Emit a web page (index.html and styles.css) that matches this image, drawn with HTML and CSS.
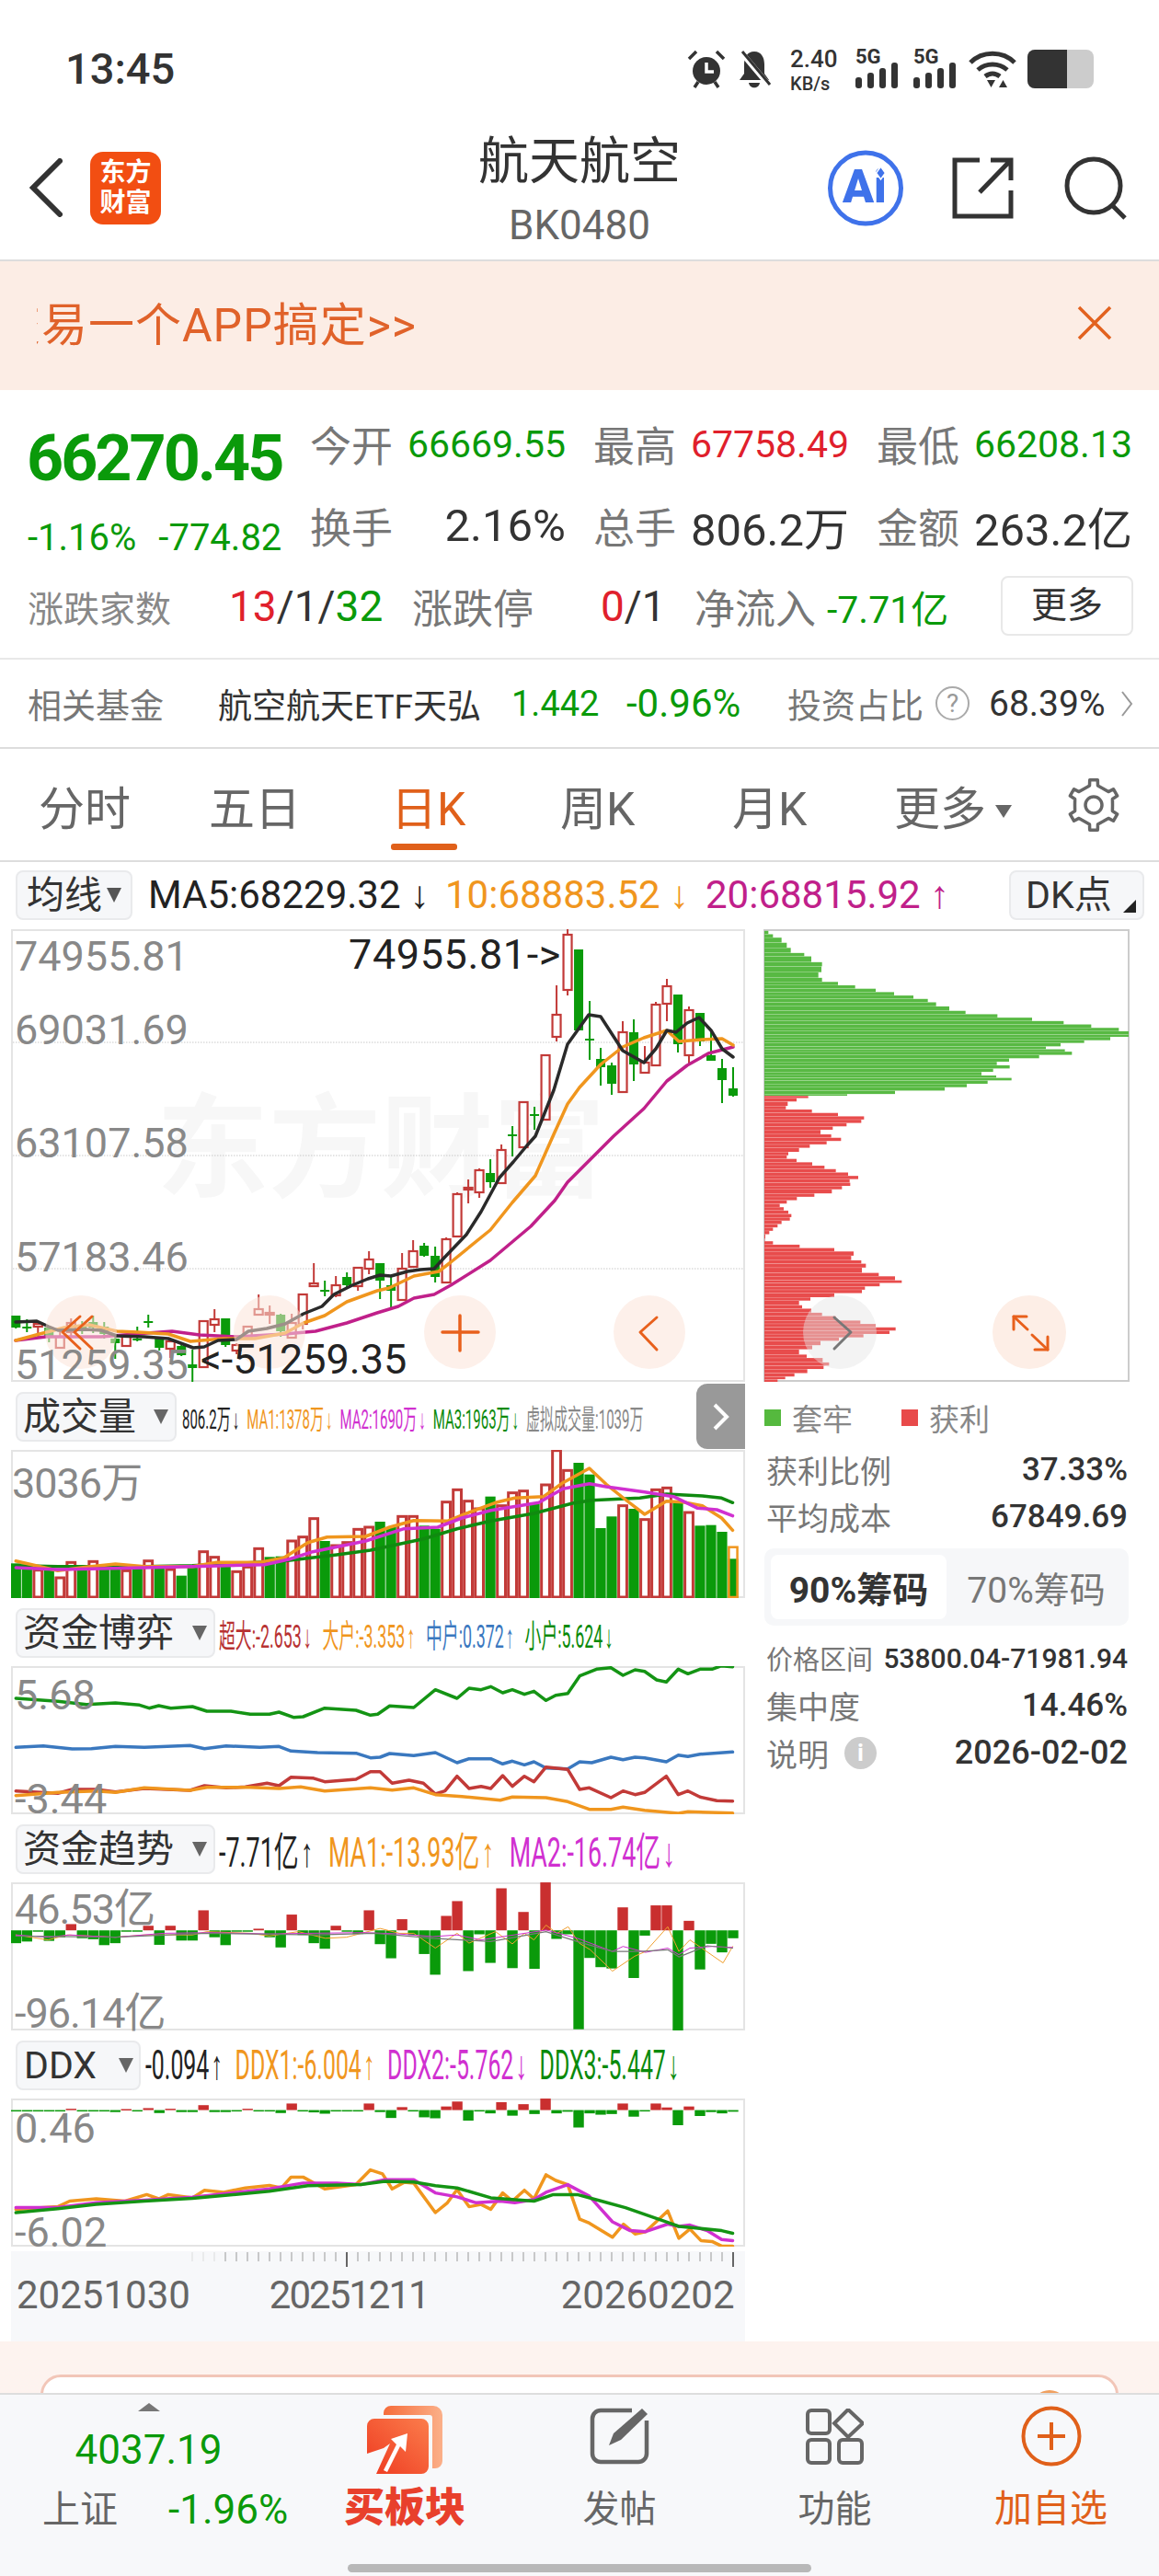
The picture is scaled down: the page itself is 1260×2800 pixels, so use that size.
FILE: index.html
```html
<!DOCTYPE html>
<html lang="zh">
<head>
<meta charset="utf-8">
<title>航天航空</title>
<link rel="stylesheet" href="styles.css">
</head>
<body>
<div class="page">
  <div class="status">
    <div class="time">13:45</div>
    <div class="sys">
      <svg class="ic-alarm" viewBox="0 0 42 42"><circle cx="21" cy="23" r="15" fill="#333"/><path d="M21 14v10h8" stroke="#fff" stroke-width="3.5" fill="none"/><path d="M2 10 10 2M40 10 32 2M8 41l4-6M34 41l-4-6" stroke="#333" stroke-width="3.5"/></svg>
      <svg class="ic-bell" viewBox="0 0 38 42"><path d="M19 2c-8 0-11 7-11 14v10L3 33h32l-5-7V16c0-7-3-14-11-14Z" fill="#333"/><path d="M13 36h12c-1 7-11 7-12 0Z" fill="#333"/><path d="M4 2 36 40" stroke="#fff" stroke-width="6"/><path d="M6 2 36 38" stroke="#333" stroke-width="3"/></svg>
      <div class="speed"><b>2.40</b><span>KB/s</span></div>
      <div class="sim"><span>5G</span><svg viewBox="0 0 46 28"><rect x="0" y="16" width="7" height="12" rx="3" fill="#333"/><rect x="13" y="11" width="7" height="17" rx="3" fill="#333"/><rect x="26" y="6" width="7" height="22" rx="3" fill="#333"/><rect x="39" y="0" width="7" height="28" rx="3" fill="#333"/></svg></div>
      <div class="sim"><span>5G</span><svg viewBox="0 0 46 28"><rect x="0" y="16" width="7" height="12" rx="3" fill="#333"/><rect x="13" y="11" width="7" height="17" rx="3" fill="#333"/><rect x="26" y="6" width="7" height="22" rx="3" fill="#333"/><rect x="39" y="0" width="7" height="28" rx="3" fill="#333"/></svg></div>
      <svg class="ic-wifi" viewBox="0 0 52 42"><path d="M2 14C15 1 37 1 50 14M10 22c9-8 23-8 32 0M18 29c5-4 11-4 16 0" fill="none" stroke="#333" stroke-width="5"/><path d="M20 33h9l-4.500 8ZM33 41h9l-4.500-8Z" fill="#333"/></svg>
      <div class="battery"><div class="battery-fill"></div></div>
    </div>
  </div>

  <header class="nav">
    <div class="nav-left">
      <svg class="ic-back" viewBox="0 0 36 64"><path d="M33 3 4 32l29 29" fill="none" stroke="#333" stroke-width="6" stroke-linecap="round"/></svg>
      <div class="logo"><span>东方</span><span>财富</span></div>
    </div>
    <div class="nav-title"><div class="title">航天航空</div><div class="code">BK0480</div></div>
    <div class="nav-right">
      <svg class="ic-ai" viewBox="0 0 82 83"><circle cx="41" cy="41.500" r="38.500" fill="#fff" stroke="#3f72ea" stroke-width="5"/><text x="16" y="57" class="ai-text">Ai</text><path d="M57.500 18l5 7-5 7-5-7Z" fill="#3f72ea" stroke="#fff" stroke-width="1.500"/></svg>
      <svg class="ic-share" viewBox="0 0 67 67"><path d="M30 3H3v61h61V36" fill="none" stroke="#333" stroke-width="5"/><path d="M30 38 63 4M42 3h22v22" fill="none" stroke="#333" stroke-width="5"/></svg>
      <svg class="ic-search" viewBox="0 0 68 69"><circle cx="32" cy="32" r="29" fill="none" stroke="#333" stroke-width="5"/><path d="M52 53 66 67" stroke="#333" stroke-width="5"/></svg>
    </div>
  </header>

  <div class="banner">
    <div class="banner-text"><span>交易一个APP搞定&gt;&gt;</span></div>
    <svg class="ic-close" viewBox="0 0 38 38"><path d="M2 2 36 36M36 2 2 36" stroke="#e2621f" stroke-width="3.500"/></svg>
  </div>

  <section class="quote">
    <div class="quote-top">
      <div class="quote-main">
        <div class="price">66270.45</div>
        <div class="change"><span>-1.16%</span><span>-774.82</span></div>
      </div>
      <div class="quote-grid">
        <div class="qcell"><span class="lab">今开</span><span class="v-sm down">66669.55</span></div>
        <div class="qcell"><span class="lab">最高</span><span class="v-sm up">67758.49</span></div>
        <div class="qcell"><span class="lab">最低</span><span class="v-sm down">66208.13</span></div>
        <div class="qcell"><span class="lab">换手</span><span class="v-lg">2.16%</span></div>
        <div class="qcell"><span class="lab">总手</span><span class="v-lg">806.2万</span></div>
        <div class="qcell"><span class="lab">金额</span><span class="v-lg">263.2亿</span></div>
      </div>
    </div>
    <div class="breadth">
      <span class="bl-sm">涨跌家数</span>
      <span class="bv"><i class="up">13</i>/1/<i class="down">32</i></span>
      <span class="bl">涨跌停</span>
      <span class="bv"><i class="up">0</i>/1</span>
      <span class="bl">净流入</span>
      <span class="bv-m down">-7.71亿</span>
      <span class="more-btn">更多</span>
    </div>
  </section>

  <div class="fund">
    <span class="fl">相关基金</span>
    <span class="fn">航空航天ETF天弘</span>
    <span class="fv-a down">1.442</span>
    <span class="fv-b down">-0.96%</span>
    <span class="fl">投资占比</span>
    <span class="help">?</span>
    <span class="fv">68.39%</span>
    <svg class="ic-fchev" viewBox="0 0 14 30"><path d="M2 2 12 15 2 28" fill="none" stroke="#999" stroke-width="2"/></svg>
  </div>

  <nav class="tabs">
    <span class="tab t1">分时</span>
    <span class="tab t2">五日</span>
    <span class="tab t3 active">日K</span>
    <span class="tab t4">周K</span>
    <span class="tab t5">月K</span>
    <span class="tab t6">更多<i class="tri-down"></i></span>
    <svg class="ic-gear" viewBox="0 0 58 58"><polygon id="gearShape" fill="none" stroke="#666" stroke-width="3.500" stroke-linejoin="round"/><circle cx="29" cy="29" r="9" fill="none" stroke="#666" stroke-width="3.500"/></svg>
  </nav>

  <div class="ma-row">
    <span class="select sel-ma">均线<i class="tri"></i></span>
    <span class="ma-val m5">MA5:68229.32<em>↓</em></span>
    <span class="ma-val m10">10:68883.52<em>↓</em></span>
    <span class="ma-val m20">20:68815.92<em>↑</em></span>
    <span class="select sel-dk">DK点<i class="corner"></i></span>
  </div>

  <div class="charts">
    <div class="col-left">
      <div class="plot plot-main">
        <div class="watermark">东方财富</div>
        <svg id="mainChart" viewBox="12 1010 798 492"></svg>
        <span class="ax a1">74955.81</span>
        <span class="ax a2">69031.69</span>
        <span class="ax a3">63107.58</span>
        <span class="ax a4">57183.46</span>
        <span class="ax a5">51259.35</span>
        <span class="mark mk1">74955.81-&gt;</span>
        <span class="mark mk2">&lt;-51259.35</span>
      </div>

      <div class="ihead">
        <span class="select sel-vol">成交量<i class="tri"></i></span>
        <div class="vals vals-vol">
          <span class="c-k">806.2万<em>↓</em></span>
          <span class="c-o">MA1:1378万<em>↓</em></span>
          <span class="c-m">MA2:1690万<em>↓</em></span>
          <span class="c-g">MA3:1963万<em>↓</em></span>
          <span class="c-gray">虚拟成交量:1039万</span>
        </div>
        <div class="side-tab"><svg viewBox="0 0 20 32"><path d="M3 3 16 16 3 29" fill="none" stroke="#fff" stroke-width="4"/></svg></div>
      </div>
      <div class="plot plot-sub">
        <svg id="volChart" viewBox="12 1576 798 161"></svg>
        <span class="ax vol-ax">3036万</span>
      </div>

      <div class="ihead">
        <span class="select sel-fund">资金博弈<i class="tri"></i></span>
        <div class="vals vals-game">
          <span class="c-r">超大:-2.653<em>↓</em></span>
          <span class="c-o">大户:-3.353<em>↑</em></span>
          <span class="c-b">中户:0.372<em>↑</em></span>
          <span class="c-g">小户:5.624<em>↓</em></span>
        </div>
      </div>
      <div class="plot plot-sub">
        <svg id="gameChart" viewBox="12 1811 798 161"></svg>
        <span class="ax g-top">5.68</span>
        <span class="ax g-bot">-3.44</span>
      </div>

      <div class="ihead">
        <span class="select sel-fund">资金趋势<i class="tri"></i></span>
        <div class="vals vals-trend">
          <span class="c-k">-7.71亿<em>↑</em></span>
          <span class="c-o">MA1:-13.93亿<em>↑</em></span>
          <span class="c-m">MA2:-16.74亿<em>↓</em></span>
        </div>
      </div>
      <div class="plot plot-sub">
        <svg id="trendChart" viewBox="12 2046 798 161"></svg>
        <span class="ax t-top">46.53亿</span>
        <span class="ax t-bot">-96.14亿</span>
      </div>

      <div class="ihead">
        <span class="select sel-ddx">DDX<i class="tri"></i></span>
        <div class="vals vals-ddx">
          <span class="c-k">-0.094<em>↑</em></span>
          <span class="c-o">DDX1:-6.004<em>↑</em></span>
          <span class="c-m">DDX2:-5.762<em>↓</em></span>
          <span class="c-g">DDX3:-5.447<em>↓</em></span>
        </div>
      </div>
      <div class="plot plot-sub">
        <svg id="ddxChart" viewBox="12 2281 798 161"></svg>
        <span class="ax d-top">0.46</span>
        <span class="ax d-bot">-6.02</span>
      </div>

      <div class="date-axis">
        <svg id="ticks" viewBox="12 2447 798 24"></svg>
        <div class="dates"><span>20251030</span><span class="date2">20251211</span><span class="date3">20260202</span></div>
      </div>
    </div>

    <aside class="col-right">
      <div class="plot plot-chip"><svg id="chipChart" viewBox="830 1010 398 492"></svg></div>
      <div class="legend">
        <i class="sq sq-g"></i><span class="leg-a">套牢</span>
        <i class="sq sq-r"></i><span>获利</span>
      </div>
      <div class="kv kv1"><span>获利比例</span><b>37.33%</b></div>
      <div class="kv kv2"><span>平均成本</span><b>67849.69</b></div>
      <div class="seg"><span class="seg-on">90%筹码</span><span class="seg-off">70%筹码</span></div>
      <div class="kv kv3"><span class="small">价格区间</span><b class="range">53800.04-71981.94</b></div>
      <div class="kv kv4"><span>集中度</span><b>14.46%</b></div>
      <div class="kv kv5"><span class="with-info">说明<i class="info">i</i></span><b class="date">2026-02-02</b></div>
    </aside>
  </div>

  <div class="promo"><div class="promo-card"><i class="dome"></i></div></div>

  <footer class="bottom">
    <div class="b-index">
      <i class="tri-up"></i>
      <div class="idx-val">4037.19</div>
      <div class="idx-row"><span>上证</span><span class="idx-pct">-1.96%</span></div>
    </div>
    <div class="b-item">
      <svg class="ic-buy" viewBox="0 0 82 74"><defs><linearGradient id="gb" x1="0" y1="1" x2="1" y2="0"><stop offset="0" stop-color="#ee3a20"/><stop offset="1" stop-color="#fb7d4c"/></linearGradient><linearGradient id="gb2" x1="0" y1="0" x2="1" y2="0"><stop offset="0" stop-color="#f66c3a"/><stop offset="1" stop-color="#fbb089"/></linearGradient></defs><path d="M18 8a8 8 0 0 1 8-8h46a10 10 0 0 1 10 10v50a8 8 0 0 1-8 8h-3V13a3 3 0 0 0-3-3H18Z" fill="url(#gb2)"/><path d="M0 22a8 8 0 0 1 8-8h51a8 8 0 0 1 8 8v44a8 8 0 0 1-8 8H10l15-33-7 5L0 52Z" fill="url(#gb)"/><path d="M26 36 44 30l-2 20-6-6-14 28-4-2 14-28Z" fill="#fff"/></svg>
      <span class="b-buy">买板块</span>
    </div>
    <div class="b-item">
      <svg class="ic-post" viewBox="0 0 65 62"><path d="M46 3H12a9 9 0 0 0-9 9v38a9 9 0 0 0 9 9h41a9 9 0 0 0 9-9V14" fill="none" stroke="#666" stroke-width="4.500"/><path d="M21 41 26 28 57 1 63 7 34 35Z" fill="#666"/></svg>
      <span class="b-lab">发帖</span>
    </div>
    <div class="b-item">
      <svg class="ic-func" viewBox="0 0 63 61"><rect x="2" y="2" width="24" height="25" rx="4" fill="none" stroke="#666" stroke-width="4"/><path d="M46 1 62 16 46 31 31 16Z" fill="none" stroke="#666" stroke-width="4"/><rect x="2" y="34" width="24" height="25" rx="4" fill="none" stroke="#666" stroke-width="4"/><rect x="36" y="34" width="25" height="25" rx="4" fill="none" stroke="#666" stroke-width="4"/></svg>
      <span class="b-lab">功能</span>
    </div>
    <div class="b-item">
      <svg class="ic-add" viewBox="0 0 66 66"><circle cx="33" cy="33" r="30.500" fill="none" stroke="#e0601a" stroke-width="4"/><path d="M33 18v30M18 33h30" stroke="#e0601a" stroke-width="4"/></svg>
      <span class="b-lab b-add">加自选</span>
    </div>
    <div class="home-bar"></div>
  </footer>
</div>
<script src="chart.js"></script>
</body>
</html>
```

FILE: styles.css
```css
* { box-sizing: border-box; }
html, body { margin: 0; padding: 0; background: #fff; }
body { font-family: Roboto, "Liberation Sans", "Noto Sans CJK SC", sans-serif; color: #333; }
i, em { font-style: normal; }
svg { display: block; }
.page { width: 1260px; height: 2800px; overflow: hidden; position: relative; }
.up { color: #e0202c; }
.down { color: #0a9a0a; }

/* status */
.status { height: 120px; display: flex; justify-content: space-between; padding: 54px 71px 0; }
.time { font-size: 47px; line-height: 42px; font-weight: 500; color: #333; }
.sys { display: flex; align-items: flex-start; height: 42px; }
.ic-alarm { width: 42px; height: 42px; }
.ic-bell { width: 38px; height: 42px; margin-left: 12px; }
.speed { margin-left: 20px; width: 60px; display: flex; flex-direction: column; }
.speed b { font-size: 26px; line-height: 20px; font-weight: 500; }
.speed span { font-size: 20px; line-height: 20px; margin-top: 7px; font-weight: 500; }
.sim { width: 46px; height: 42px; margin-left: 11px; position: relative; display: flex; flex-direction: column; }
.sim + .sim { margin-left: 17px; }
.sim span { font-size: 22px; line-height: 16px; font-weight: 700; }
.sim svg { width: 46px; height: 28px; margin-top: -2px; }
.ic-wifi { width: 52px; height: 42px; margin-left: 14px; }
.battery { width: 72px; height: 42px; margin-left: 12px; background: #ccc; border-radius: 8px; overflow: hidden; }
.battery-fill { width: 43px; height: 42px; background: #333; }

/* nav */
.nav { height: 164px; display: grid; grid-template-columns: 1fr auto 1fr; border-bottom: 2px solid #ddd; }
.nav-left { display: flex; align-items: center; padding-left: 32px; gap: 30px; padding-top: 6px; }
.ic-back { width: 36px; height: 64px; }
.logo { width: 77px; height: 79px; background: #f24e12; border-radius: 14px; color: #fff; font-size: 28px; line-height: 33px; font-weight: 700; display: flex; flex-direction: column; align-items: center; justify-content: center; }
.nav-title { text-align: center; padding-top: 25px; }
.title { font-size: 55px; line-height: 60px; color: #333; }
.code { font-size: 44px; line-height: 40px; margin-top: 20px; color: #666; }
.nav-right { display: flex; align-items: center; justify-content: flex-end; padding-right: 35px; padding-top: 6px; }
.ic-ai { width: 82px; height: 83px; }
.ai-text { font: 900 50px Roboto, sans-serif; fill: #3f72ea; }
.ic-share { width: 67px; height: 67px; margin-left: 53px; }
.ic-search { width: 68px; height: 69px; margin-left: 55px; }

/* banner */
.banner { height: 140px; background: #fcede5; display: flex; align-items: center; justify-content: space-between; padding: 0 51px 0 40px; }
.banner-text { width: 600px; overflow: hidden; }
.banner-text span { display: block; margin-left: -46px; font-size: 50px; line-height: 56px; letter-spacing: 1px; color: #e0622a; white-space: nowrap; }
.ic-close { width: 38px; height: 38px; margin-top: -6px; }

/* quote */
.quote { height: 293px; border-bottom: 2px solid #e8e8e8; padding: 14px 0 0 30px; }
.quote-top { display: flex; height: 178px; }
.quote-main { width: 309px; padding-top: 30px; }
.price { font-size: 70px; line-height: 60px; font-weight: 700; color: #0a9a0a; letter-spacing: -3px; margin-left: -1px; }
.change { display: flex; gap: 24px; margin-top: 27px; font-size: 40px; line-height: 60px; color: #0a9a0a; }
.quote-grid { display: grid; grid-template-columns: repeat(3, 276px); column-gap: 32px; grid-auto-rows: 89px; }
.qcell { display: flex; align-items: center; justify-content: space-between; }
.lab { font-size: 45px; color: #777; margin-left: -2px; }
.v-sm { font-size: 41px; }
.v-lg { font-size: 49px; color: #333; }
.breadth { margin-left: -30px; padding-left: 30px; margin-top: 10px; height: 65px; display: grid; grid-template-columns: 219px 199px 205px 102px 144px 189px 144px; align-items: center; }
.bl-sm { font-size: 39px; color: #888; }
.bl { font-size: 44px; color: #777; }
.bv { font-size: 46px; color: #333; }
.bv-m { font-size: 41px; }
.more-btn { height: 65px; border: 2px solid #e8e8e8; border-radius: 8px; font-size: 39px; line-height: 60px; text-align: center; color: #333; }

/* fund */
.fund { height: 97px; border-bottom: 2px solid #ddd; display: grid; padding-left: 30px; grid-template-columns: 207px 322px 122px 175px 161px 58px 143px 14px; align-items: center; }
.fl { font-size: 37px; color: #777; }
.fn { font-size: 37px; color: #333; white-space: nowrap; }
.fv { font-size: 39px; }
.fv-a { font-size: 38px; margin-left: -3px; }
.fv-b { font-size: 42px; }
.help { width: 37px; height: 37px; border: 2px solid #aaa; border-radius: 50%; color: #999; font-size: 28px; line-height: 33px; text-align: center; }
.ic-fchev { width: 14px; height: 30px; }

/* tabs */
.tabs { height: 123px; border-bottom: 2px solid #ddd; padding-left: 42px; display: grid; grid-template-columns: 185px 201px 181px 187px 176px 186px 58px; align-items: center; }
.tab { font-size: 50px; color: #666; position: relative; white-space: nowrap; }
.tab.active { color: #e0601a; margin-left: -3px; }
.tab.active::after { content: ""; position: absolute; left: 0; top: 78px; width: 72px; height: 7px; border-radius: 3px; background: #e0601a; }
.tri-down { display: inline-block; margin-left: 10px; vertical-align: 8px; border-style: solid; border-width: 14px 9px 0; border-color: #666 transparent transparent; }
.ic-gear { width: 58px; height: 58px; margin-left: 2px; }

/* MA row */
.ma-row { height: 73px; padding: 9px 16px 0 17px; display: flex; align-items: flex-start; position: relative; }
.select { flex: none; height: 54px; border: 2px solid #e9eaec; border-radius: 8px; background: #f6f7f9; color: #333; font-size: 41px; line-height: 50px; display: flex; align-items: center; position: relative; white-space: nowrap; }
.tri { position: absolute; top: 17px; border-style: solid; border-width: 16px 8px 0; border-color: #666 transparent transparent; }
.sel-ma { width: 127px; padding-left: 10px; }
.sel-ma .tri { left: 97px; border-color: #555 transparent transparent; }
.ma-val { font-size: 42px; line-height: 54px; white-space: nowrap; }
.ma-val em { margin-left: 10px; }
.m5 { margin-left: 17px; color: #222; width: 323px; }
.m10 { color: #f0961e; width: 283px; }
.m20 { color: #c0208a; }
.sel-dk { width: 147px; padding-left: 16px; margin-left: auto; }
.corner { position: absolute; right: 7px; bottom: 6px; border-style: solid; border-width: 0 0 14px 14px; border-color: transparent transparent #222; }

/* charts */
.charts { display: flex; height: 1535px; padding-left: 12px; gap: 20px; }
.col-left { width: 798px; }
.col-right { width: 398px; }
.plot { position: relative; width: 798px; outline: 2px solid #e4e4e4; outline-offset: -2px; }
.plot svg { position: relative; width: 100%; height: 100%; }
.plot-main { height: 492px; }
.plot-sub { height: 161px; }
.plot-chip { width: 398px; height: 492px; outline-color: #ccc; }
.watermark { position: absolute; left: 158px; top: 175px; font-size: 122px; line-height: 130px; font-weight: 700; color: #f7f7f7; white-space: nowrap; }
.ax { position: absolute; left: 4px; font-size: 45px; line-height: 36px; color: #888; white-space: nowrap; }
.a1 { top: 12px; } .a2 { top: 92px; } .a3 { top: 215px; } .a4 { top: 339px; } .a5 { top: 456px; }
.mark { position: absolute; font-size: 45px; line-height: 36px; color: #222; white-space: nowrap; }
.mk1 { left: 367px; top: 10px; letter-spacing: .6px; }
.mk2 { left: 206px; top: 450px; }
.vol-ax { left: 1px; top: 19px; letter-spacing: -1px; }
.g-top { top: 14px; } .g-bot { top: 127px; }
.t-top { top: 12px; letter-spacing: -1px; } .t-bot { top: 125px; letter-spacing: -1px; }
.d-top { top: 15px; } .d-bot { top: 128px; }

.ihead { height: 74px; position: relative; padding: 11px 0 0 5px; display: flex; align-items: flex-start; }
.sel-vol { width: 175px; padding-left: 6px; }
.sel-vol .tri { left: 148px; }
.sel-fund { width: 217px; padding-left: 6px; }
.sel-fund .tri { left: 190px; }
.sel-ddx { width: 136px; padding-left: 7px; }
.sel-ddx .tri { left: 110px; }
.vals { flex: none; display: flex; white-space: nowrap; transform-origin: left center; height: 54px; align-items: center; }
.vals em { margin-left: 4px; }
.vals-vol { margin-left: 6px; font-size: 30px; gap: 16px; transform: scaleX(.5); }
.vals-game { margin-left: 4px; font-size: 35px; gap: 23px; transform: scaleX(.51); }
.vals-trend { margin-left: 4px; font-size: 44px; gap: 27px; transform: scaleX(.61); }
.vals-ddx { margin-left: 5px; font-size: 44px; gap: 24px; transform: scaleX(.565); }
.c-k { color: #222; } .c-o { color: #f0961e; } .c-m { color: #d030d0; } .c-g { color: #0a8a0a; } .c-gray { color: #888; } .c-r { color: #b83232; } .c-b { color: #3a78bf; }
.side-tab { position: absolute; right: 0; top: 2px; bottom: 1px; width: 53px; background: #999; border-radius: 12px 0 0 12px; display: flex; align-items: center; justify-content: center; }
.side-tab svg { width: 20px; height: 32px; }

.date-axis { height: 98px; margin-top: 5px; background: #f7f8fa; }
#ticks { width: 798px; height: 24px; }
.dates { display: flex; padding: 2px 0 0 6px; font-size: 42px; line-height: 44px; color: #666; white-space: nowrap; }
.date2 { margin-left: 86px; letter-spacing: -2px; }
.date3 { margin-left: 144px; }

/* right */
.legend { height: 64px; padding-top: 14px; display: flex; align-items: center; font-size: 33px; color: #888; padding-left: 1px; }
.sq { width: 18px; height: 18px; margin-right: 12px; }
.sq-g { background: #55b93e; }
.sq-r { background: #e84a4a; }
.leg-a { width: 119px; }
.kv { display: flex; justify-content: space-between; align-items: center; padding: 0 2px 0 3px; font-size: 34px; color: #777; white-space: nowrap; }
.kv b { font-size: 35px; font-weight: 500; color: #333; }
.kv1 { height: 50px; margin-top: 6px; }
.kv2 { height: 50px; margin-top: 1px; }
.seg { margin: 10px 1px 0; height: 84px; background: #f6f7f9; border-radius: 10px; padding: 7px; display: flex; align-items: stretch; }
.seg-on { width: 191px; background: #fff; border-radius: 8px; font-size: 39px; font-weight: 700; color: #333; display: flex; align-items: center; justify-content: center; }
.seg-off { flex: 1; font-size: 39px; color: #777; display: flex; align-items: center; justify-content: center; padding-left: 4px; }
.kv3 { height: 50px; margin-top: 10px; }
.small { font-size: 29px; }
.kv b.range { font-size: 30px; }
.kv4 { height: 50px; margin-top: 1px; }
.kv5 { height: 50px; margin-top: 2px; }
.kv b.date { font-size: 36px; }
.with-info { display: flex; align-items: center; }
.info { width: 35px; height: 35px; margin-left: 17px; border-radius: 50%; background: #ccc; color: #fff; font-size: 26px; font-weight: 700; line-height: 35px; text-align: center; }

/* promo */
.promo { height: 56px; background: #fdf3ef; padding: 36px 44px 0; overflow: hidden; }
.promo-card { height: 100px; background: #fff; border: 3px solid #f2c6b8; border-radius: 22px 22px 0 0; position: relative; }
.dome { position: absolute; left: 1074px; top: 14px; width: 40px; height: 40px; border-radius: 50%; background: #f0a060; }

/* bottom */
.bottom { height: 199px; background: #f7f8fa; border-top: 2px solid #ddd; display: grid; grid-template-columns: 323px 234px 233px 235px 235px; position: relative; }
.b-index { display: flex; flex-direction: column; align-items: center; padding-top: 9px; }
.tri-up { border-style: solid; border-width: 0 12px 9px; border-color: transparent transparent #777; }
.idx-val { font-size: 44px; line-height: 50px; margin-top: 17px; color: #0a9a0a; }
.idx-row { align-self: stretch; padding-left: 46px; display: flex; align-items: center; margin-top: 15px; font-size: 41px; line-height: 50px; color: #666; white-space: nowrap; }
.idx-pct { margin-left: 55px; font-size: 44px; color: #0a9a0a; }
.b-item { display: flex; flex-direction: column; align-items: center; padding-top: 12px; }
.ic-buy { width: 82px; height: 74px; }
.b-buy { font-size: 44px; line-height: 50px; margin-top: 12px; font-weight: 900; color: #e8402c; }
.ic-post { width: 65px; height: 62px; margin-top: 2px; }
.ic-func { width: 63px; height: 61px; margin-top: 3px; }
.ic-add { width: 66px; height: 66px; }
.b-lab { font-size: 40px; line-height: 50px; color: #666; margin-top: 24px; }
.b-add { color: #e0601a; font-size: 41px; margin-top: 21px; }
.home-bar { position: absolute; left: 378px; top: 184px; width: 504px; height: 9px; border-radius: 5px; background: #b8b8b8; }
```

FILE: chart.js
```js
var NS = 'http://www.w3.org/2000/svg';
var GREEN = '#0a9a0a', RED = '#c23a38';
function el(parent, tag, attrs) {
  var e = document.createElementNS(NS, tag);
  for (var k in attrs) e.setAttribute(k, attrs[k]);
  parent.appendChild(e);
  return e;
}
function cx(i) { return 17.3 + 11.995 * i; }
function smoothLine(svg, pts, color, w) {
  el(svg, 'polyline', { points: pts.map(function (p) { return p[0].toFixed(1) + ',' + p[1].toFixed(1); }).join(' '), fill: 'none', stroke: color, 'stroke-width': w, 'stroke-linejoin': 'round', 'stroke-linecap': 'round' });
}
function pairs(flat, fx, fy) {
  var out = [];
  for (var i = 0; i < flat.length; i += 2) out.push([fx(flat[i]), fy(flat[i + 1])]);
  return out;
}

/* ---------- main candlesticks: [red?, top, bottom, high, low] ---------- */
var candles = [
[0,1430,1443,1430,1444],[0,1442,1444,1434,1448],[1,1439,1442,1436,1453],[0,1443,1453,1443,1459],[1,1453,1465,1445,1465],
[1,1438,1448,1433,1452],[0,1440,1446,1436,1450],[0,1437,1443,1430,1449],[0,1442,1450,1437,1455],[0,1455,1460,1450,1477],
[1,1453,1463,1453,1463],[0,1455,1457,1442,1458],[0,1436,1438,1429,1443],[0,1453,1465,1453,1468],[1,1458,1466,1456,1476],
[0,1463,1473,1462,1474],[0,1483,1487,1467,1503],[1,1436,1486,1436,1486],[1,1434,1440,1423,1448],[0,1433,1462,1433,1464],
[1,1462,1468,1460,1472],[1,1442,1455,1442,1456],[1,1423,1429,1407,1430],[1,1427,1429,1419,1439],[0,1429,1447,1428,1453],
[1,1438,1454,1428,1454],[1,1407,1439,1406,1445],[1,1395,1398,1373,1398],[0,1402,1403,1392,1409],[1,1397,1408,1387,1410],
[0,1388,1397,1383,1400],[1,1378,1398,1378,1403],[1,1369,1379,1360,1385],[0,1373,1392,1373,1412],[0,1397,1403,1388,1422],
[1,1379,1413,1362,1413],[1,1360,1377,1348,1377],[0,1354,1365,1351,1366],[0,1365,1388,1355,1394],[1,1347,1394,1345,1394],
[1,1298,1344,1296,1344],[1,1291,1293,1282,1308],[1,1272,1296,1270,1302],[0,1275,1285,1260,1291],[1,1250,1286,1244,1286],
[0,1233,1235,1224,1257],[1,1198,1247,1197,1247],[0,1211,1213,1203,1228],[1,1147,1217,1147,1217],[1,1103,1127,1071,1132],
[1,1016,1076,1010,1082],[0,1032,1120,1032,1120],[0,1129,1131,1088,1152],[0,1151,1160,1139,1180],[0,1158,1178,1155,1190],
[1,1122,1187,1110,1187],[0,1122,1157,1108,1175],[1,1155,1166,1137,1166],[1,1092,1158,1089,1158],[1,1072,1091,1064,1110],
[0,1081,1135,1081,1144],[1,1098,1147,1094,1156],[0,1101,1132,1101,1137],[0,1147,1153,1120,1153],[0,1161,1174,1151,1199],[0,1183,1191,1160,1192]
];
var main = document.getElementById('mainChart');
[1133, 1256, 1379].forEach(function (y) {
  el(main, 'line', { x1: 14, x2: 808, y1: y, y2: y, stroke: '#c8c8c8', 'stroke-width': 1, 'stroke-dasharray': '1.500 1.500' });
});
candles.forEach(function (c, i) {
  var x = cx(i), col = c[0] ? RED : GREEN;
  el(main, 'line', { x1: x, x2: x, y1: c[3], y2: c[4], stroke: col, 'stroke-width': 2 });
  if (c[0]) el(main, 'rect', { x: x - 4.5, y: c[1], width: 9, height: c[2] - c[1], fill: '#fff', stroke: col, 'stroke-width': 2.2 });
  else el(main, 'rect', { x: x - 5, y: c[1], width: 10, height: Math.max(c[2] - c[1], 2), fill: col });
});
smoothLine(main, [[17,1457],[50,1453],[110,1453],[160,1449],[187,1447],[217,1451],[257,1453],[310,1450],[343,1447],[377,1438],[410,1427],[433,1420],[450,1411],[472,1407],[490,1397],[533,1370],[577,1333],[603,1305],[617,1285],[667,1235],[700,1205],[725,1175],[747,1158],[770,1145],[797,1138]], '#c0208a', 3.5);
smoothLine(main, [[17,1457],[43,1450],[70,1443],[97,1440],[127,1447],[150,1448],[183,1450],[207,1458],[243,1455],[277,1455],[310,1449],[330,1438],[353,1430],[377,1415],[410,1403],[423,1400],[450,1387],[477,1382],[490,1372],[533,1337],[557,1307],[582,1278],[602,1233],[617,1200],[630,1182],[653,1157],[677,1138],[700,1128],[725,1120],[738,1132],[763,1130],[785,1129],[797,1136]], '#f0961e', 3.5);
smoothLine(main, [[17,1437],[40,1436],[53,1442],[63,1446],[93,1445],[110,1446],[127,1452],[157,1453],[183,1455],[210,1465],[222,1464],[237,1457],[257,1456],[270,1447],[290,1444],[310,1439],[330,1428],[350,1420],[363,1407],[383,1397],[400,1390],[413,1386],[425,1387],[443,1382],[457,1380],[472,1379],[483,1367],[507,1342],[523,1317],[543,1280],[558,1263],[573,1245],[582,1235],[602,1185],[617,1135],[640,1103],[653,1105],[677,1142],[700,1155],[713,1140],[725,1120],[735,1122],[747,1112],[760,1106],[773,1120],[785,1140],[797,1149]], '#2a2a2a', 3.5);
[88, 293, 500, 706].forEach(function (x) {
  el(main, 'ellipse', { cx: x, cy: 1448, rx: 39, ry: 40, fill: '#fce4d8', 'fill-opacity': 0.55 });
});
var OR = '#e8601c';
smoothLine(main, [[87,1431],[68,1448],[87,1466]], OR, 3);
smoothLine(main, [[100,1431],[81,1448],[100,1466]], OR, 3);
smoothLine(main, [[500,1430],[500,1468]], OR, 3.5);
smoothLine(main, [[481,1448],[520,1448]], OR, 3.5);
smoothLine(main, [[714,1432],[696,1448],[714,1467]], OR, 3);

/* ---------- volume ---------- */
var volRed = [2,4,5,7,10,12,14,17,18,20,21,22,25,26,27,29,30,31,32,35,36,39,40,41,42,44,45,46,48,49,50,55,57,58,59,61];
var volTop = [658,665,680,678,705,655,670,652,670,670,682,672,650,675,678,698,672,620,638,668,685,670,610,637,635,585,572,512,585,600,590,547,540,522,540,505,505,535,545,458,418,455,480,440,470,428,422,465,402,290,355,330,368,543,505,470,480,515,418,412,460,492,535,533,555,643];
var vol = document.getElementById('volChart');
var vy = function (z) { return 1480 + z / 3; }, vx = function (z) { return z / 1.912; };
volTop.forEach(function (t, i) {
  var x = cx(i), y = vy(t);
  if (volRed.indexOf(i) >= 0) el(vol, 'rect', { x: x - 4.4, y: y, width: 8.8, height: 1736 - y, fill: '#fff', stroke: RED, 'stroke-width': 3 });
  else el(vol, 'rect', { x: x - 5.6, y: y, width: 11.2, height: 1737 - y, fill: GREEN });
});
el(vol, 'rect', { x: cx(65) - 4.6, y: vy(605), width: 9.2, height: 1736 - vy(605), fill: 'none', stroke: '#f0961e', 'stroke-width': 2.5 });
smoothLine(vol, pairs([33,665,120,668,300,668,400,665,590,650,700,630,770,615,880,578,950,545,1020,520,1110,495,1190,462,1230,452,1330,445,1385,432,1460,438,1500,445,1523,460], vx, vy), '#108a10', 3.5);
smoothLine(vol, pairs([33,650,60,660,120,682,180,670,240,660,300,668,400,668,450,655,540,655,590,640,640,590,680,572,760,570,810,540,860,518,930,520,970,495,1030,460,1070,445,1130,440,1170,395,1225,348,1260,400,1300,450,1340,498,1385,455,1420,458,1460,470,1500,510,1523,550], vx, vy), '#f0961e', 3.5);
smoothLine(vol, pairs([33,672,120,678,300,672,400,668,550,662,600,645,650,620,760,585,840,545,910,540,960,510,1020,485,1120,460,1170,415,1225,398,1260,408,1340,425,1400,440,1450,478,1490,483,1523,503], vx, vy), '#d030d0', 3.5);

/* ---------- capital game ---------- */
var game = document.getElementById('gameChart');
smoothLine(game, pairs([33,1098,120,1108,180,1118,240,1113,290,1120,310,1130,330,1122,355,1130,400,1125,430,1140,480,1140,520,1150,560,1150,580,1143,610,1160,630,1158,675,1130,740,1137,770,1153,785,1150,810,1123,860,1128,905,1070,950,1098,975,1065,1000,1070,1020,1060,1045,1080,1065,1070,1090,1085,1110,1075,1135,1105,1155,1088,1180,1082,1205,1025,1240,1003,1270,998,1295,1023,1320,1005,1340,1010,1365,1038,1385,1045,1410,1003,1430,1018,1455,1003,1480,1003,1500,992,1523,995], vx, vy), '#149414', 3.5);
smoothLine(game, pairs([33,1258,90,1253,150,1263,190,1262,240,1255,300,1258,395,1252,425,1262,470,1253,540,1258,580,1255,605,1270,660,1275,740,1277,770,1292,790,1290,810,1278,860,1285,905,1275,950,1308,975,1295,1020,1295,1045,1312,1065,1303,1090,1315,1110,1305,1135,1325,1180,1328,1205,1305,1230,1308,1270,1290,1295,1298,1320,1290,1340,1292,1385,1305,1410,1283,1430,1288,1455,1280,1523,1273], vx, vy), '#3a78bf', 3.5);
smoothLine(game, pairs([33,1400,120,1408,150,1395,200,1395,240,1403,300,1392,395,1398,425,1383,470,1390,510,1387,555,1375,580,1383,605,1355,650,1358,675,1370,740,1362,770,1337,790,1337,815,1375,850,1365,880,1375,905,1410,925,1400,950,1352,975,1392,1000,1385,1020,1392,1045,1350,1065,1385,1090,1352,1110,1370,1135,1322,1180,1330,1205,1395,1225,1390,1270,1422,1295,1400,1320,1412,1340,1405,1385,1352,1410,1412,1430,1400,1455,1420,1490,1432,1523,1433], vx, vy), '#c23a38', 3.5);
smoothLine(game, pairs([33,1415,120,1405,200,1400,240,1405,300,1390,395,1398,430,1388,520,1388,580,1392,625,1387,675,1400,770,1390,815,1397,860,1390,905,1412,960,1418,1040,1430,1065,1420,1135,1422,1180,1435,1225,1460,1270,1460,1295,1453,1340,1463,1410,1473,1430,1468,1523,1472], vx, vy), '#f0961e', 3.5);

/* ---------- bars for trend & ddx: positive sign means red ---------- */
function bars(svg, list, base, fy) {
  list.forEach(function (v, i) {
    var red = v > 0, z = Math.abs(v), y = fy(z), x = cx(i);
    var top = red ? y : base, h = Math.max(Math.abs(y - base), 1.5);
    el(svg, 'rect', { x: x - 5.7, y: top, width: 11.4, height: h, fill: red ? '#c92f2f' : GREEN });
  });
}
var ty = function (z) { return 1980 + z / 2.8; };
var trend = document.getElementById('trendChart');
bars(trend, [-370,-365,-335,-363,-352,312,-355,-358,-376,-370,-333,-333,317,-375,317,-362,-362,270,-352,-376,-333,-333,326,-352,-383,283,-345,-370,-387,317,-335,-342,270,-373,-416,297,-345,-403,-466,287,242,-455,-343,-430,203,-446,275,-448,185,-357,-343,-632,-415,-443,-447,261,-476,-347,255,255,-636,302,-450,-372,-398,-355], ty(331), ty);
smoothLine(trend, pairs([33,345,100,360,140,345,240,352,300,345,400,345,430,335,520,340,560,348,620,335,676,355,720,352,790,325,830,340,860,340,905,385,950,340,975,370,1030,335,1065,372,1090,340,1110,360,1135,315,1158,340,1181,320,1204,370,1227,390,1273,455,1319,410,1342,395,1388,320,1411,395,1434,360,1503,430,1523,380], vx, ty), '#f0a030', 1);
smoothLine(trend, pairs([33,345,100,352,145,345,240,352,340,340,440,338,560,342,640,340,760,338,830,342,900,350,950,345,1000,360,1135,330,1200,355,1273,395,1295,380,1342,398,1388,385,1411,405,1434,385,1480,380,1523,383], vx, ty), '#d030d0', 1);
smoothLine(trend, pairs([33,348,240,352,430,340,660,345,780,340,900,355,1020,365,1135,335,1200,365,1273,395,1330,395,1388,390,1411,412,1470,378,1523,385], vx, ty), '#777', 1.2);

var ddx = document.getElementById('ddxChart');
bars(ddx, [-882,-882,-882,-882,-882,874,-882,-882,-882,-884,875,-880,872,-887,874,-884,-884,863,-884,-884,-880,874,-880,-880,-887,858,-880,-885,-889,-880,-880,-880,858,-884,-902,869,-880,-900,-903,867,852,-910,-880,-888,854,-895,860,-890,843,-888,-883,-931,-888,-892,-890,858,-898,-880,858,870,-924,867,-896,-884,-888,-883], ty(878), ty);
smoothLine(ddx, pairs([33,1180,120,1172,145,1155,200,1148,260,1155,305,1135,330,1148,350,1135,400,1145,425,1122,465,1128,510,1115,560,1107,585,1115,605,1082,630,1082,675,1118,740,1105,770,1060,795,1072,815,1118,840,1098,860,1100,905,1190,930,1160,950,1120,975,1172,1000,1165,1020,1180,1045,1130,1065,1155,1090,1122,1110,1148,1135,1075,1155,1092,1180,1105,1205,1210,1225,1222,1273,1265,1296,1225,1320,1255,1342,1248,1388,1185,1411,1268,1434,1240,1457,1275,1480,1278,1500,1292,1523,1292], vx, ty), '#f0961e', 3.5);
smoothLine(ddx, pairs([33,1175,120,1175,200,1160,300,1152,400,1143,560,1118,630,1100,700,1100,750,1105,800,1090,860,1090,905,1130,950,1142,990,1160,1040,1155,1070,1160,1110,1150,1135,1128,1180,1105,1225,1140,1273,1218,1310,1245,1342,1248,1388,1225,1411,1232,1434,1228,1470,1245,1500,1272,1523,1275], vx, ty), '#d030d0', 3.5);
smoothLine(ddx, pairs([33,1190,120,1178,200,1165,300,1155,400,1147,560,1125,640,1108,750,1105,800,1095,860,1097,905,1108,950,1115,1020,1145,1110,1155,1150,1135,1200,1135,1250,1155,1300,1175,1388,1220,1411,1232,1500,1245,1523,1253], vx, ty), '#149414', 3.5);

/* ---------- date ticks ---------- */
var ticks = document.getElementById('ticks');
for (var i = 0; i < 50; i++) {
  var tx = 209 + 12 * i;
  var big = Math.abs(tx - 377) < 1 || Math.abs(tx - 797) < 1;
  el(ticks, 'line', { x1: tx, x2: tx, y1: 2448, y2: big ? 2464 : 2458, stroke: big ? '#666' : '#999', 'stroke-width': big ? 2 : 1, 'stroke-opacity': i < 3 ? 0.3 : 1 });
}

/* ---------- chip distribution: zoomed y, zoomed right edge ---------- */
var chipG = [140,105,150,120,160,148,175,165,190,178,205,222,215,245,232,280,245,278,262,268,278,280,290,332,300,388,310,455,320,515,330,578,340,625,350,652,362,695,375,748,385,852,395,965,405,1068,415,1158,425,1248,435,1280,445,1280,452,1220,462,1135,470,1058,480,1010,488,1072,495,1095,505,988,515,890,525,850,535,892,545,838,555,800,565,848,572,898,580,820,590,752,600,680,610,518,620,362,625,362];
var chipR = [625,235,632,197,642,168,655,162,665,247,675,332,685,417,695,408,705,360,715,315,725,275,738,310,748,342,758,295,768,240,778,205,790,170,800,165,810,197,820,248,830,288,840,325,850,365,860,398,870,370,880,372,890,345,900,312,912,255,922,198,932,165,942,142,952,155,962,170,972,180,982,175,992,148,1002,135,1012,120,1022,108,1032,95,1045,93,1052,120,1062,207,1072,320,1082,383,1095,375,1108,408,1118,423,1130,410,1145,465,1155,518,1167,540,1175,468,1185,420,1195,410,1205,320,1217,242,1227,205,1240,215,1250,245,1262,280,1272,325,1285,405,1295,455,1305,520,1315,500,1325,415,1335,335,1345,275,1358,248,1370,205,1385,230,1395,282,1408,303,1418,285,1428,232,1440,190,1450,160,1458,135,1466,118];
var chip = document.getElementById('chipChart');
var cy = function (z) { return 960 + z / 2.703; };
function chipBars(list, color) {
  for (var k = 0; k + 3 < list.length; k += 2) {
    var y0 = cy(list[k]), y1 = cy(list[k + 2]);
    el(chip, 'rect', { x: 831, y: y0, width: (list[k + 1] - 92) / 3, height: y1 - y0 - 0.25, fill: color });
  }
}
chipBars(chipG, '#58b943');
chipBars(chipR, '#e84c4c');
el(chip, 'ellipse', { cx: 913, cy: 1448, rx: 40, ry: 40, fill: '#e4e4e4', 'fill-opacity': 0.45 });
el(chip, 'ellipse', { cx: 1119, cy: 1448, rx: 40, ry: 40, fill: '#fdeee6' });
smoothLine(chip, [[907,1432],[925,1448],[907,1466]], '#777', 3);
[[[1102,1445],[1102,1431],[1116,1431]], [[1102,1431],[1117,1445]], [[1125,1467],[1139,1467],[1139,1453]], [[1139,1467],[1122,1451]]].forEach(function (p) {
  smoothLine(chip, p, OR, 3);
});

/* ---------- gear outline ---------- */
var pts = [];
for (var t = 0; t < 6; t++) {
  var a = -90 + t * 60;
  [[-30, 20.5], [-12, 21.5], [-9, 27.5], [9, 27.5], [12, 21.5]].forEach(function (p) {
    var r = (a + p[0]) * Math.PI / 180;
    pts.push((29 + p[1] * Math.cos(r)).toFixed(1) + ',' + (29 + p[1] * Math.sin(r)).toFixed(1));
  });
}
document.getElementById('gearShape').setAttribute('points', pts.join(' '));
```
